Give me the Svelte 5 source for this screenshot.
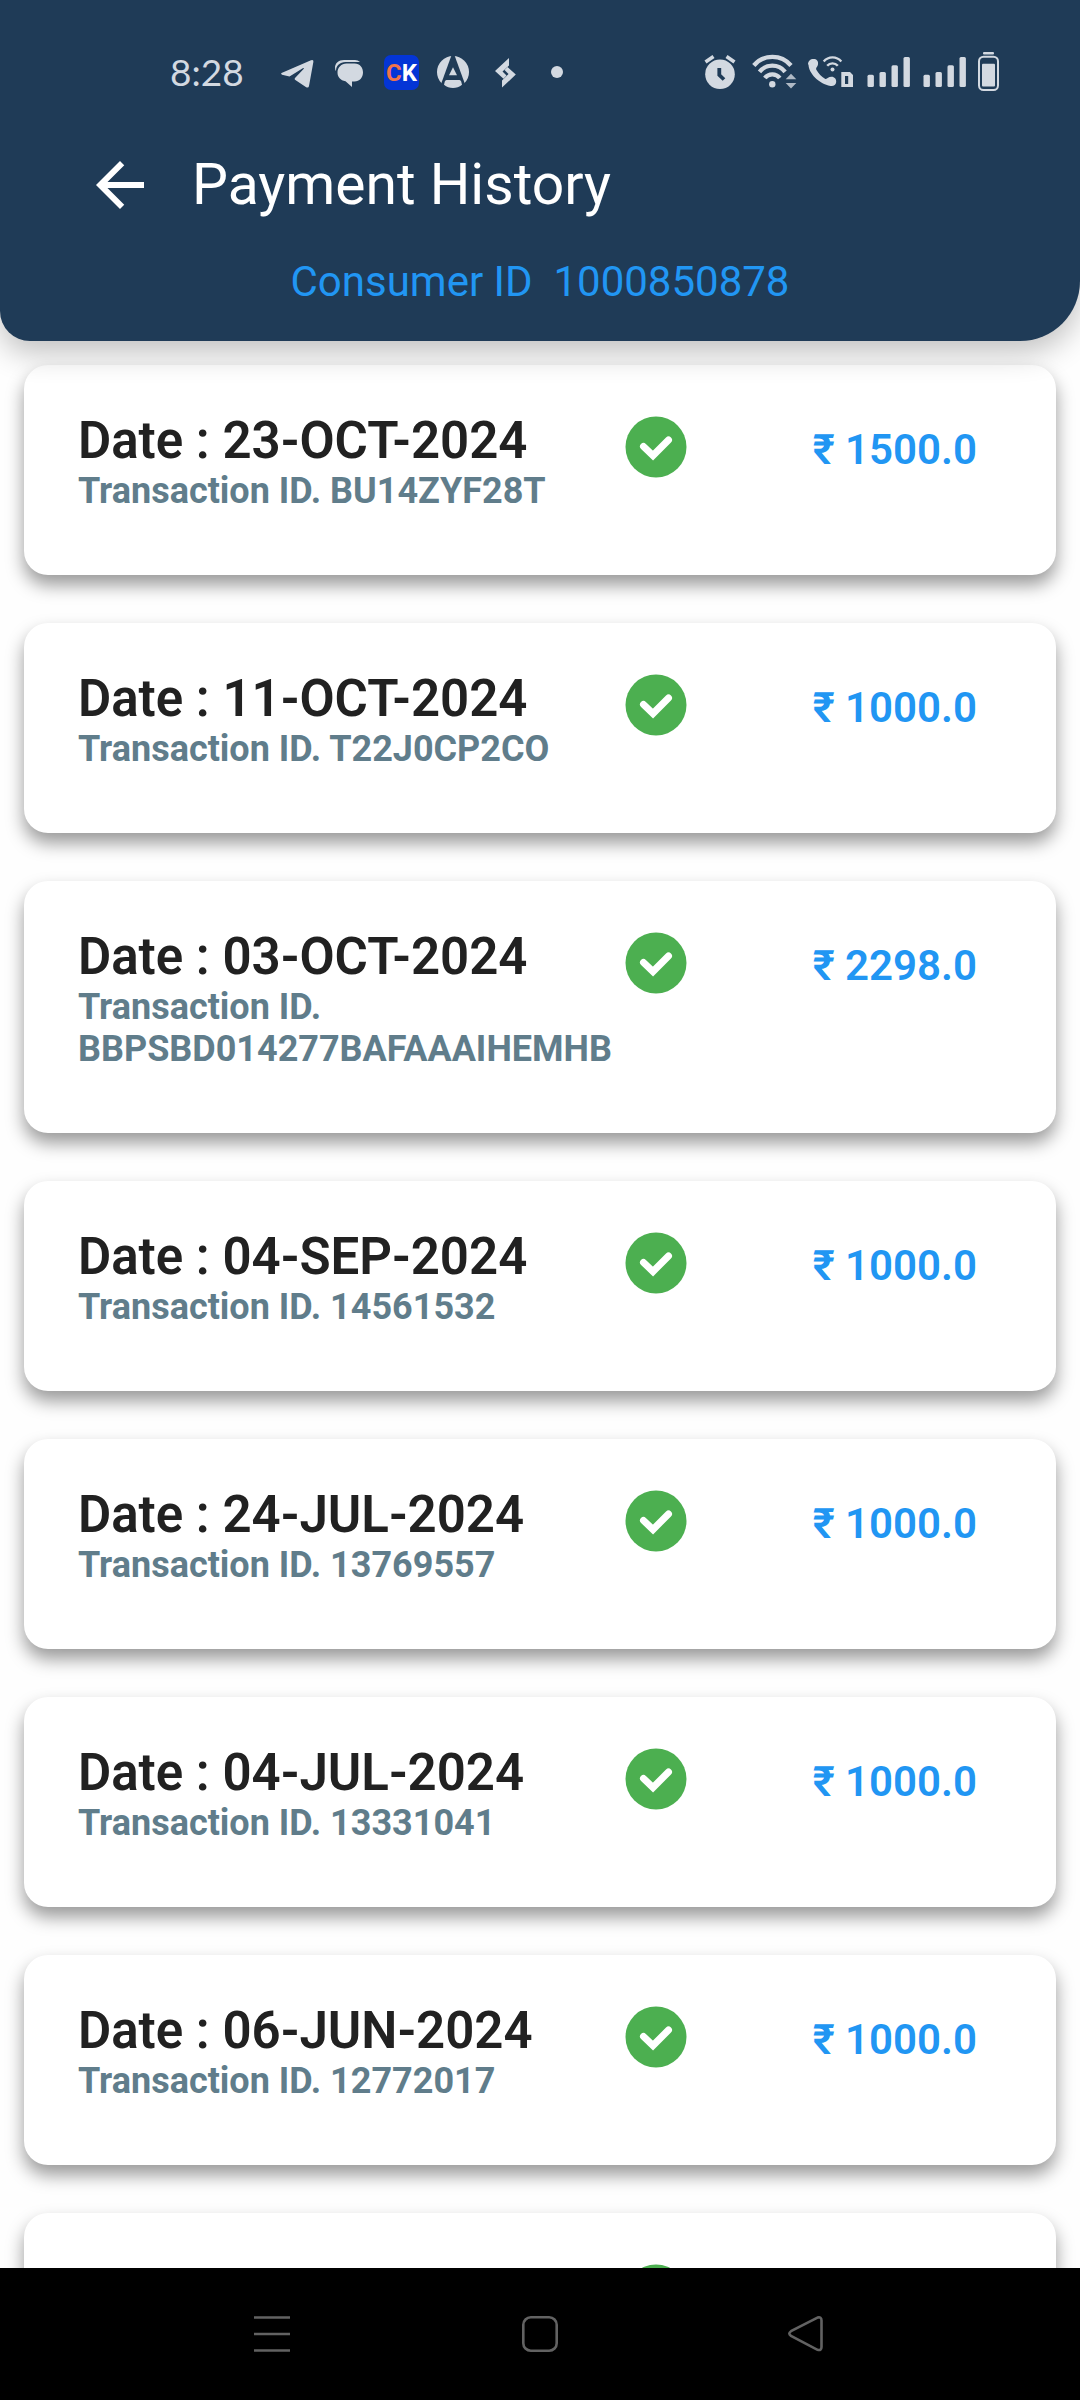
<script lang="ts">
	type Payment = {
		date: string;
		transactionId: string;
		amount: string;
	};

	const consumerId = "1000850878";

	const payments: Payment[] = [
		{ date: "23-OCT-2024", transactionId: "BU14ZYF28T", amount: "1500.0" },
		{ date: "11-OCT-2024", transactionId: "T22J0CP2CO", amount: "1000.0" },
		{ date: "03-OCT-2024", transactionId: "BBPSBD014277BAFAAAIHEMHB", amount: "2298.0" },
		{ date: "04-SEP-2024", transactionId: "14561532", amount: "1000.0" },
		{ date: "24-JUL-2024", transactionId: "13769557", amount: "1000.0" },
		{ date: "04-JUL-2024", transactionId: "13331041", amount: "1000.0" },
		{ date: "06-JUN-2024", transactionId: "12772017", amount: "1000.0" }
	];
</script>

{#snippet check()}
	<svg class="check" viewBox="0 0 62 62" aria-hidden="true">
		<circle cx="31" cy="31" r="30.5" fill="#4caf50" />
		<path d="M18.500 30.500l9.500 9L43.500 24" fill="none" stroke="#fff" stroke-width="7" stroke-linecap="round" />
	</svg>
{/snippet}

{#snippet signal()}
	<svg width="46" height="44" viewBox="0 0 46 44" aria-hidden="true">
		<rect x="1.5" y="24.7" width="6.4" height="12.3" rx="1.5" />
		<rect x="13.5" y="22" width="6.4" height="15" rx="1.5" />
		<rect x="25.5" y="15.3" width="6.4" height="21.7" rx="1.5" />
		<rect x="37.5" y="7" width="6.4" height="30" rx="1.5" />
	</svg>
{/snippet}

<div class="screen">
	<header>
		<div class="status-bar">
			<span class="time">8:28</span>
			<div class="notifications">
				<svg width="36" height="44" viewBox="0 0 36 44" aria-hidden="true">
					<path d="M1.5 23L31 10.2q2.700-1 2.400 1.600L29 36q-.5 2.400-2.800 1.200L15 29.800q-.8-.8 0-1.800l8.800-9.300q.4-1.200-1-.5L9.500 26.500l-7.500-1.800q-1.600-.8-.5-1.700z" />
				</svg>
				<svg width="36" height="44" viewBox="0 0 36 44" aria-hidden="true">
					<path d="M14.500 13.500h8C28 13.500 31 17.500 31 22.500s-3.500 9-8.500 9h-2.500V37l-6.500-5.700C8.500 30.500 5.500 27 5.500 22.500c0-5 3.800-9 9-9z" />
					<path d="M4 21C4 15.500 8 12 13.500 12H28q-2-2-5-2H12C6.500 10 3 13.500 3 17.500Q3 20 4 21z" />
				</svg>
				<svg width="36" height="44" viewBox="0 0 36 44" aria-hidden="true">
					<rect x="0" y="5" width="35" height="35" rx="7" fill="#0435d6" />
					<text class="ck" x="2" y="31" fill="#f0744a">C<tspan fill="#fff">K</tspan></text>
				</svg>
				<svg width="36" height="44" viewBox="0 0 36 44" aria-hidden="true">
					<circle cx="17" cy="22" r="16" />
					<path class="cut" d="M15.600 5h2.800l12 33H3.600z" />
					<path d="M17 17.300l4 7.900h-8zM10.500 30h13q1.200 0 1.700 1.500l.8 3.200Q22 38 17 38t-9-3.300l.8-3.200q.5-1.500 1.700-1.500z" />
				</svg>
				<svg width="36" height="44" viewBox="0 0 36 44" aria-hidden="true">
					<path d="M21 8v7.500L14.500 21.500l4 4-3 3.200L7 21z" />
					<path d="M14 37.600v-7.200l6.500-6.400-4-4 3-3L27.800 24.500z" />
				</svg>
				<svg width="36" height="44" viewBox="0 0 36 44" aria-hidden="true">
					<circle cx="17" cy="22" r="6" />
				</svg>
			</div>
			<div class="system">
				<svg width="40" height="44" viewBox="0 0 40 44" aria-hidden="true">
					<circle cx="18" cy="24.300" r="14.800" />
					<path d="M3.500 12L11.500 6.500M24.500 6.500l8 5.500" fill="none" stroke="currentColor" stroke-width="3.600" />
					<path class="cut-line" d="M17.300 18v7l4.700 4.500" stroke-width="3.800" />
				</svg>
				<svg width="46" height="44" viewBox="0 0 46 44" aria-hidden="true">
					<g fill="none" stroke="currentColor" stroke-width="4.300">
						<path d="M1.800 15.500a24.400 24.400 0 0 1 37.200 0" />
						<path d="M7.500 21.800a16.500 16.500 0 0 1 25.600 0" />
						<path d="M12.800 28a9.500 9.500 0 0 1 15 0" />
					</g>
					<circle cx="20.300" cy="34.300" r="3.200" />
					<path d="M39 23.700l5.300 5.600H33.700zM39 38.600l5.300-5.600H33.700z" opacity=".8" />
				</svg>
				<svg width="48" height="44" viewBox="0 0 48 44" aria-hidden="true">
					<path d="M0 14.500C0 11 2.300 9 5.500 9s5 2 4.500 5.200c-.3 2.600-2.800 3.600-1.500 5.800 2 3.700 5 6.500 8.500 8.700 2 1 3-2 6.500-2 3 0 5 2.300 4.700 5.300-.3 3-2.700 4.500-5.700 4-11.500-2-22-13-22-21.500z" />
					<g fill="none" stroke="currentColor" stroke-width="2.400">
						<path d="M15.700 11.500a11.500 11.500 0 0 1 17.600 0" />
						<path d="M19.200 15.800a7 7 0 0 1 10.600 0" />
					</g>
					<circle cx="24.500" cy="19.500" r="2" />
					<path fill-rule="evenodd" d="M33.300 22H42l3 3v12H33.300zM37 26v8h3.200v-8z" />
				</svg>
				{@render signal()}
				{@render signal()}
				<svg width="22" height="44" viewBox="0 0 22 44" aria-hidden="true">
					<rect x="5" y="2" width="11" height="2.400" rx="1" />
					<rect x="1" y="6.700" width="19" height="33.300" rx="4.500" fill="none" stroke="currentColor" stroke-width="2" />
					<rect x="4" y="13.800" width="13" height="22.600" rx="1" />
				</svg>
			</div>
		</div>

		<div class="toolbar">
			<button class="back" aria-label="Back">
				<svg width="72" height="72" viewBox="0 0 24 24" aria-hidden="true">
					<path d="M20 11H7.830l5.590-5.590L12 4l-8 8 8 8 1.410-1.410L7.830 13H20v-2z" />
				</svg>
			</button>
			<h1>Payment History</h1>
		</div>

		<p class="consumer">Consumer ID&nbsp; {consumerId}</p>
	</header>

	<main>
		{#each payments as payment}
			<article class="card">
				<div class="details">
					<h2>Date : {payment.date}</h2>
					<p>Transaction ID. {payment.transactionId}</p>
				</div>
				{@render check()}
				<span class="amount">₹ {payment.amount}</span>
			</article>
		{/each}
		<!-- next row, still cut off by the navigation bar -->
		<article class="card">
			<div class="details"></div>
			{@render check()}
		</article>
	</main>

	<nav>
		<button aria-label="Recent apps">
			<svg width="36" height="36" viewBox="0 0 36 36" aria-hidden="true">
				<path d="M0 1.500h36M0 18h36M0 34.500h36" />
			</svg>
		</button>
		<button aria-label="Home">
			<svg width="36" height="36" viewBox="0 0 36 36" aria-hidden="true">
				<rect x="1.300" y="1.300" width="33.400" height="33.400" rx="7.500" />
			</svg>
		</button>
		<button aria-label="Go back">
			<svg width="36" height="36" viewBox="0 0 36 36" aria-hidden="true">
				<path d="M27.500 1.600L1 15.200q-3.400 2.400 0 4.800l26.500 13.800q4 1 4-2.800V4.400q0-3.800-4-2.800z" />
			</svg>
		</button>
	</nav>
</div>

<style>
	:global(body) {
		margin: 0;
		background: #fff;
	}

	.screen {
		display: flex;
		flex-direction: column;
		height: 100vh;
		overflow: hidden;
		background: #fefefe;
		font-family: Roboto, "Noto Sans", sans-serif;
	}

	h1,
	h2,
	p {
		margin: 0;
	}

	svg {
		display: block;
		flex: none;
		overflow: visible;
	}

	button {
		padding: 0;
		border: none;
		background: none;
		color: inherit;
		cursor: pointer;
	}

	header {
		position: relative;
		z-index: 1;
		flex: none;
		padding: 50px 0 34px;
		border-radius: 0 0 60px 30px;
		background: #1f3b57;
		box-shadow: 0 12px 30px rgba(0, 0, 0, 0.24);
		color: #fff;
	}

	.status-bar {
		display: flex;
		align-items: center;
		padding: 0 80px 0 170px;
		color: #d3d9e1;
	}

	.status-bar svg {
		fill: currentColor;
	}

	.time {
		width: 110px;
		font-family: Lato, sans-serif;
		font-size: 37px;
		line-height: 44px;
	}

	.notifications {
		display: flex;
		gap: 16px;
	}

	.ck {
		font-size: 24px;
		font-weight: 700;
	}

	.status-bar .cut {
		fill: #1f3b57;
	}

	.cut-line {
		fill: none;
		stroke: #1f3b57;
	}

	.system {
		display: flex;
		gap: 10px;
		margin-left: auto;
	}

	.toolbar {
		display: flex;
		align-items: center;
		gap: 36px;
		margin-top: 55px;
		padding: 0 84px;
	}

	.back svg {
		fill: #fff;
	}

	h1 {
		font-size: 57px;
		font-weight: 400;
		line-height: 72px;
	}

	.consumer {
		margin-top: 36px;
		color: #2196f3;
		font-size: 42px;
		line-height: 50px;
		text-align: center;
	}

	main {
		display: flex;
		flex: 1;
		flex-direction: column;
		gap: 48px;
		min-height: 0;
		padding: 24px;
		overflow: hidden;
	}

	.card {
		display: grid;
		flex: none;
		grid-template-columns: minmax(0, 1fr) 62px 290px;
		align-items: start;
		padding: 46px 79px 63px 54px;
		border-radius: 24px;
		background: #fff;
		box-shadow: 0 10px 18px rgba(0, 0, 0, 0.4);
	}

	.details {
		min-height: 101px;
	}

	h2 {
		color: #212121;
		font-size: 51px;
		font-weight: 600;
		line-height: 59px;
	}

	.details p {
		color: #607d8b;
		font-size: 36px;
		font-weight: 700;
		line-height: 42px;
	}

	.check {
		width: 62px;
		height: 62px;
		margin-top: 5px;
	}

	.amount {
		margin-top: 14px;
		color: #2196f3;
		font-size: 42px;
		font-weight: 600;
		line-height: 50px;
		text-align: right;
	}

	nav {
		display: flex;
		flex: none;
		align-items: center;
		justify-content: space-between;
		height: 132px;
		padding: 0 23.5%;
		background: #000;
	}

	nav svg {
		fill: none;
		stroke: #626262;
		stroke-width: 2.6;
	}
</style>
